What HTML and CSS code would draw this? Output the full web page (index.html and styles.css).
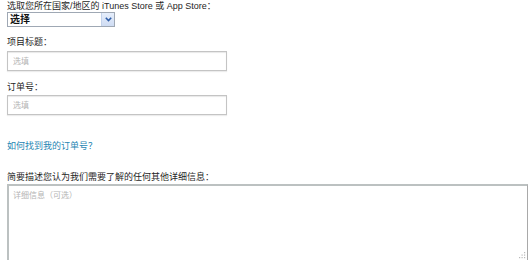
FILE: index.html
```html
<!DOCTYPE html>
<html lang="zh-CN">
<head>
<meta charset="utf-8">
<title>表单</title>
<link rel="stylesheet" href="styles.css">
</head>
<body>
<form class="form">
  <div class="field field-store">
    <label class="label">选取您所在国家/地区的 iTunes Store 或 App Store：</label>
    <div class="select">
      <span class="select-value">选择</span>
      <span class="select-btn">
        <svg width="7" height="5" viewBox="0 0 7 5"><path d="M0.8 0.8 L3.5 3.6 L6.2 0.8" fill="none" stroke="#2f5ea8" stroke-width="1.6"/></svg>
      </span>
    </div>
  </div>
  <div class="field field-title">
    <label class="label">项目标题：</label>
    <input class="input" type="text" placeholder="选填">
  </div>
  <div class="field field-order">
    <label class="label">订单号：</label>
    <input class="input" type="text" placeholder="选填">
  </div>
  <a class="help-link" href="#">如何找到我的订单号？</a>
  <div class="field field-details">
    <label class="label">简要描述您认为我们需要了解的任何其他详细信息：</label>
    <div class="textarea-wrap">
      <textarea class="textarea" placeholder="详细信息（可选）"></textarea>
      <svg class="grip" width="9" height="9" viewBox="0 0 9 9">
        <g fill="#b9b9b9">
          <rect x="7" y="1" width="1.2" height="1.2"/>
          <rect x="4.5" y="3.5" width="1.2" height="1.2"/>
          <rect x="7" y="3.5" width="1.2" height="1.2"/>
          <rect x="2" y="6" width="1.2" height="1.2"/>
          <rect x="4.5" y="6" width="1.2" height="1.2"/>
          <rect x="7" y="6" width="1.2" height="1.2"/>
        </g>
      </svg>
    </div>
  </div>
</form>
</body>
</html>
```
FILE: styles.css
```css
html, body {
  margin: 0;
  padding: 0;
  background: #fff;
}
body {
  font-family: "Liberation Sans", "Noto Sans CJK SC", sans-serif;
  font-size: 9px;
  color: #1e1e1e;
  overflow: hidden;
}
.form {
  display: flex;
  flex-direction: column;
  align-items: flex-start;
  padding: 0 0 0 7px;
}
.field {
  display: flex;
  flex-direction: column;
  align-items: flex-start;
}
.label {
  display: block;
  line-height: 12px;
  height: 12px;
  color: #1e1e1e;
}
.select {
  display: flex;
  align-items: stretch;
  box-sizing: border-box;
  width: 108px;
  height: 15px;
  border: 1px solid #9fa8b4;
  background: #fff;
}
.select-value {
  flex: 1;
  padding-left: 2px;
  font-size: 10px;
  line-height: 13px;
  font-weight: bold;
  color: #111;
}
.select-btn {
  width: 12px;
  display: flex;
  align-items: center;
  justify-content: center;
  background: linear-gradient(#e6eefb, #cfdcf3);
  border-left: 1px solid #c3d2ea;
}
.field-title {
  margin-top: 9px;
}
.field-order {
  margin-top: 10px;
}
.input {
  box-sizing: border-box;
  width: 220px;
  height: 20px;
  margin: 3px 0 0;
  padding: 0 0 0 5px;
  border: 1px solid #c4c4c4;
  box-shadow: inset 0 1px 1px #e8e8e8, 0 1px 1px #ececec;
  font-family: "Liberation Sans", "Noto Sans CJK SC", sans-serif;
  font-size: 8px;
  color: #333;
  background: #fff;
  outline: none;
}
.field-order .input {
  margin-top: 2px;
}
.input::placeholder,
.textarea::placeholder {
  color: #b4b4b4;
}
.help-link {
  margin-top: 25px;
  line-height: 12px;
  color: #1f86b3;
  text-decoration: none;
}
.field-details {
  margin-top: 19px;
}
.textarea-wrap {
  position: relative;
  margin-top: 1px;
}
.textarea {
  display: block;
  box-sizing: border-box;
  width: 521px;
  height: 77px;
  margin: 0;
  padding: 3px 4px;
  border-style: solid;
  border-color: #bcc1c1 #a9a9a9 #a9a9a9 #bcc1c1;
  border-width: 2px 1px 0 2px;
  font-family: "Liberation Sans", "Noto Sans CJK SC", sans-serif;
  font-size: 8px;
  resize: none;
  outline: none;
}
.grip {
  position: absolute;
  right: 2px;
  bottom: 1px;
}
```
